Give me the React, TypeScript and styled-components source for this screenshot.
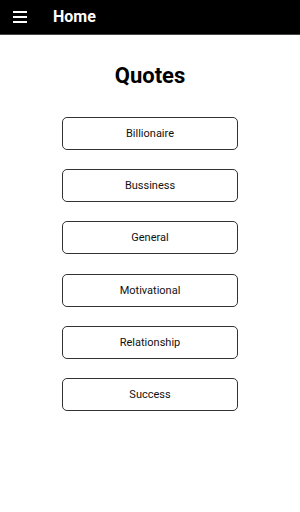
import React from "react";
import styled, { createGlobalStyle } from "styled-components";

const Global = createGlobalStyle`
  html, body { margin: 0; padding: 0; background: #fff; }
  body { font-family: Roboto, "Noto Sans", sans-serif; }
`;

const Page = styled.div`
  width: 300px;
  min-height: 512px;
  background: #fff;
`;

const Header = styled.header`
  height: 34px;
  background: #000;
  border-bottom: 1px solid #444;
  display: flex;
  align-items: center;
  padding-left: 13px;
  gap: 12px;
`;

const MenuButton = styled.div`
  width: 14px;
  height: 12px;
  display: flex;
  flex-direction: column;
  justify-content: space-between;
  margin-right: 14px;
  span {
    display: block;
    height: 2px;
    background: #fff;
  }
`;

const HeaderTitle = styled.h1`
  margin: 0;
  color: #fff;
  font-size: 16px;
  font-weight: 700;
  line-height: 1;
`;

const Main = styled.main`
  display: flex;
  flex-direction: column;
  align-items: center;
  padding-top: 27px;
`;

const Title = styled.h2`
  margin: 0 0 27px;
  font-size: 22px;
  font-weight: 700;
  line-height: 28px;
  color: #000;
`;

const List = styled.div`
  display: flex;
  flex-direction: column;
  gap: 19.2px;
`;

const Item = styled.button`
  width: 176px;
  height: 33px;
  border: 1px solid #333;
  border-radius: 5px;
  background: #fff;
  font-family: Roboto, "Noto Sans", sans-serif;
  font-size: 11px;
  color: #111;
  padding: 0;
`;

const categories = ["Billionaire", "Bussiness", "General", "Motivational", "Relationship", "Success"];

export default function App() {
  return (
    <Page>
      <Global />
      <Header>
        <MenuButton>
          <span />
          <span />
          <span />
        </MenuButton>
        <HeaderTitle>Home</HeaderTitle>
      </Header>
      <Main>
        <Title>Quotes</Title>
        <List>
          {categories.map((c) => (
            <Item key={c}>{c}</Item>
          ))}
        </List>
      </Main>
    </Page>
  );
}
